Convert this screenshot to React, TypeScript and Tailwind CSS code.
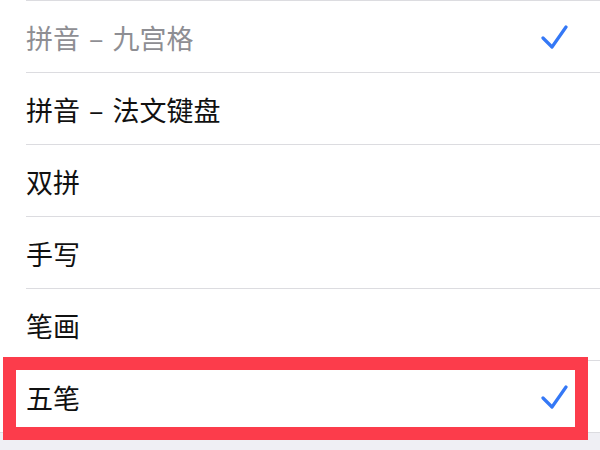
import React from "react";

type Row = { label: string; sub?: string; checked?: boolean; muted?: boolean };

const rows: Row[] = [
  { label: "拼音", sub: "九宫格", checked: true, muted: true },
  { label: "拼音", sub: "法文键盘" },
  { label: "双拼" },
  { label: "手写" },
  { label: "笔画" },
  { label: "五笔", checked: true },
];

function Check() {
  return (
    <svg width="27" height="24" viewBox="0 0 27 24" fill="none">
      <polyline
        points="2,13 11,22 25,2"
        stroke="#3478f6"
        strokeWidth="3.2"
        strokeLinecap="round"
        strokeLinejoin="round"
      />
    </svg>
  );
}

export default function App() {
  return (
    <div
      className="relative w-[600px] h-[450px] overflow-hidden bg-[#efeff4]"
      style={{ fontFamily: '"Noto Sans CJK SC", "Noto Sans", sans-serif' }}
    >
      <div className="bg-white border-b border-[#dcdce0]">
        {rows.map((row) => (
          <div key={row.label + (row.sub ?? "")} className="h-[72px] flex flex-col">
            <div className="ml-[26px] h-px bg-[#dcdce0]" />
            <div className="flex-1 flex items-center justify-between pl-[26px] pr-[32px]">
              <span
                className={
                  "text-[27px] leading-none pt-[2px] " +
                  (row.muted ? "text-[#8e8e93]" : "text-[#111]")
                }
              >
                {row.label}
                {row.sub && (
                  <>
                    <span className="mx-[9px]">–</span>
                    {row.sub}
                  </>
                )}
              </span>
              {row.checked && <Check />}
            </div>
          </div>
        ))}
      </div>

      {/* highlight frame around 五笔 */}
      <div className="absolute left-[3px] top-[357px] w-[585px] h-[83px] border-[13px] border-[#fc3c4b]" />
    </div>
  );
}
